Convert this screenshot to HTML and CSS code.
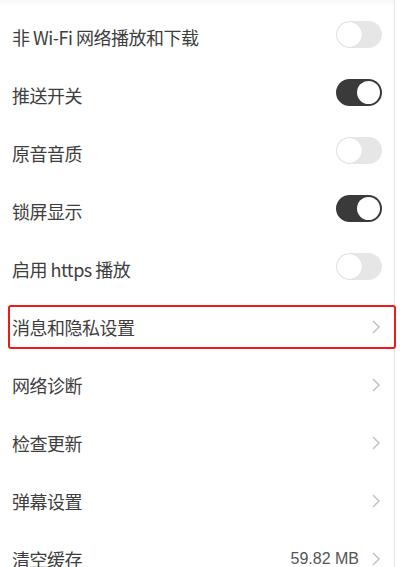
FILE: index.html
```html
<!DOCTYPE html>
<html lang="zh-CN">
<head>
<meta charset="utf-8">
<link rel="stylesheet" href="styles.css">
</head>
<body>
<div class="page">
  <div class="row"><span class="label">非 Wi-Fi 网络播放和下载</span><span class="switch"></span></div>
  <div class="row"><span class="label">推送开关</span><span class="switch on"></span></div>
  <div class="row"><span class="label">原音音质</span><span class="switch"></span></div>
  <div class="row"><span class="label">锁屏显示</span><span class="switch on"></span></div>
  <div class="row"><span class="label">启用 https 播放</span><span class="switch"></span></div>
  <div class="row highlight"><span class="label">消息和隐私设置</span><svg class="chev" viewBox="0 0 8 14"><polyline points="1,1 7,7 1,13"/></svg></div>
  <div class="row"><span class="label">网络诊断</span><svg class="chev" viewBox="0 0 8 14"><polyline points="1,1 7,7 1,13"/></svg></div>
  <div class="row"><span class="label">检查更新</span><svg class="chev" viewBox="0 0 8 14"><polyline points="1,1 7,7 1,13"/></svg></div>
  <div class="row"><span class="label">弹幕设置</span><svg class="chev" viewBox="0 0 8 14"><polyline points="1,1 7,7 1,13"/></svg></div>
  <div class="row"><span class="label">清空缓存</span><span class="value">59.82 MB</span><svg class="chev" viewBox="0 0 8 14"><polyline points="1,1 7,7 1,13"/></svg></div>
</div>
</body>
</html>
```
FILE: styles.css
```css
html, body {
  margin: 0;
  padding: 0;
  background: #fff;
}
body {
  font-family: "Noto Sans CJK SC", sans-serif;
  overflow: hidden;
  height: 567px;
}
.page {
  width: 395px;
  height: 567px;
  border-right: 1px solid #e4e4e4;
  padding-top: 8px;
  box-sizing: border-box;
  background: linear-gradient(#f8f8f8, #fff 6px);
}
.row {
  position: relative;
  height: 58px;
  display: flex;
  align-items: center;
  padding: 0 12px 0 12px;
}
.label {
  flex: 1;
  font-size: 18px;
  letter-spacing: -0.5px;
  color: #3e3e3e;
  white-space: nowrap;
}
.value {
  font-family: "Liberation Sans", sans-serif;
  font-size: 16px;
  color: #555;
  margin-right: 13px;
}
.switch {
  position: relative;
  width: 46px;
  height: 27px;
  border-radius: 14px;
  background: #e6e6e6;
  margin-top: -6px;
}
.switch::after {
  content: "";
  position: absolute;
  left: 1px;
  top: 1px;
  width: 25px;
  height: 25px;
  border-radius: 50%;
  background: #fff;
  box-shadow: 0 0 1px rgba(0,0,0,0.15);
}
.switch.on {
  background: #3a3a3a;
}
.switch.on::after {
  left: auto;
  right: 2px;
  top: 2px;
  width: 23px;
  height: 23px;
}
.chev {
  width: 8px;
  height: 14px;
  margin-right: 2px;
}
.chev polyline {
  fill: none;
  stroke: #bdbdbd;
  stroke-width: 1.4;
}
.highlight::after {
  content: "";
  position: absolute;
  left: 8px;
  right: -2px;
  top: 7px;
  bottom: 7px;
  border: 2px solid #f01818;
  border-radius: 3px;
}
```
